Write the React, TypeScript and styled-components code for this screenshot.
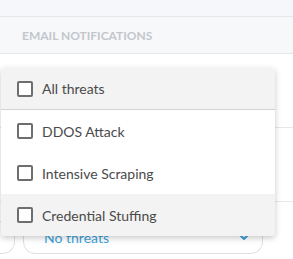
import React from "react";
import styled, { createGlobalStyle } from "styled-components";

const Global = createGlobalStyle`
  html, body { margin: 0; padding: 0; background: #ffffff; }
  body { font-family: Lato, "Open Sans", sans-serif; overflow: hidden; }
  * { box-sizing: border-box; }
`;

const Page = styled.div`
  position: relative;
  width: 293px;
  height: 259px;
  overflow: hidden;
  background: #ffffff;
`;

const TopBand = styled.div`
  height: 17px;
  background: #f5f7fb;
  border-bottom: 1px solid #e4e7ec;
`;

const SectionHeader = styled.div`
  height: 37px;
  display: flex;
  align-items: center;
  padding-left: 22px;
  padding-top: 1px;
  background: #f7f8fa;
  border-bottom: 1px solid #e3e6ea;
  font-size: 12px;
  font-weight: 700;
  text-transform: uppercase;
  color: #c3c6cc;
`;

const Row = styled.div<{ $h: number }>`
  height: ${(p) => p.$h}px;
  border-bottom: 1px solid #e6e8eb;
  display: flex;
  align-items: flex-start;
  gap: 8px;
  padding-top: 19px;
  margin-left: -20px;
`;

const SelectBox = styled.div<{ $w: number }>`
  width: ${(p) => p.$w}px;
  height: 33px;
  flex: none;
  border: 1px solid #dcdfe3;
  border-radius: 12px;
  display: flex;
  align-items: center;
  justify-content: space-between;
  padding: 0 13px 0 20px;
  font-size: 14px;
  color: #3d9fdb;
`;

const Menu = styled.div`
  position: absolute;
  left: 1px;
  top: 68px;
  width: 274px;
  background: #ffffff;
  border-radius: 4px;
  box-shadow: 0 2px 6px rgba(0, 0, 0, 0.22);
  overflow: hidden;
`;

const Option = styled.div<{ $shaded?: boolean; $divider?: boolean }>`
  height: 42px;
  display: flex;
  align-items: center;
  gap: 9px;
  padding-left: 16px;
  background: ${(p) => (p.$shaded ? "#f3f3f3" : "#ffffff")};
  border-bottom: ${(p) => (p.$divider ? "1px solid #d2d2d2" : "none")};
  font-size: 14px;
  color: #4a4a4a;
`;

const Check = styled.span`
  width: 16px;
  height: 16px;
  flex: none;
  border: 2px solid #6e6e6e;
  border-radius: 2px;
  background: #ffffff;
`;

const Chevron = () => (
  <svg width="10" height="7" viewBox="0 0 10 7" fill="none">
    <path d="M1.5 1.5 L5 5 L8.5 1.5" stroke="#3d9fdb" strokeWidth="2" strokeLinecap="round" strokeLinejoin="round" />
  </svg>
);

const options = ["All threats", "DDOS Attack", "Intensive Scraping", "Credential Stuffing"];

export default function App() {
  return (
    <Page>
      <Global />
      <TopBand />
      <SectionHeader>Email notifications</SectionHeader>
      <Row $h={74} />
      <Row $h={74} />
      <Row $h={60}>
        <SelectBox $w={33} />
        <SelectBox $w={240}>
          <span>No threats</span>
          <Chevron />
        </SelectBox>
      </Row>
      <Menu>
        {options.map((o, i) => (
          <Option key={o} $shaded={i === 0 || i === 3} $divider={i === 0}>
            <Check />
            <span>{o}</span>
          </Option>
        ))}
      </Menu>
    </Page>
  );
}
